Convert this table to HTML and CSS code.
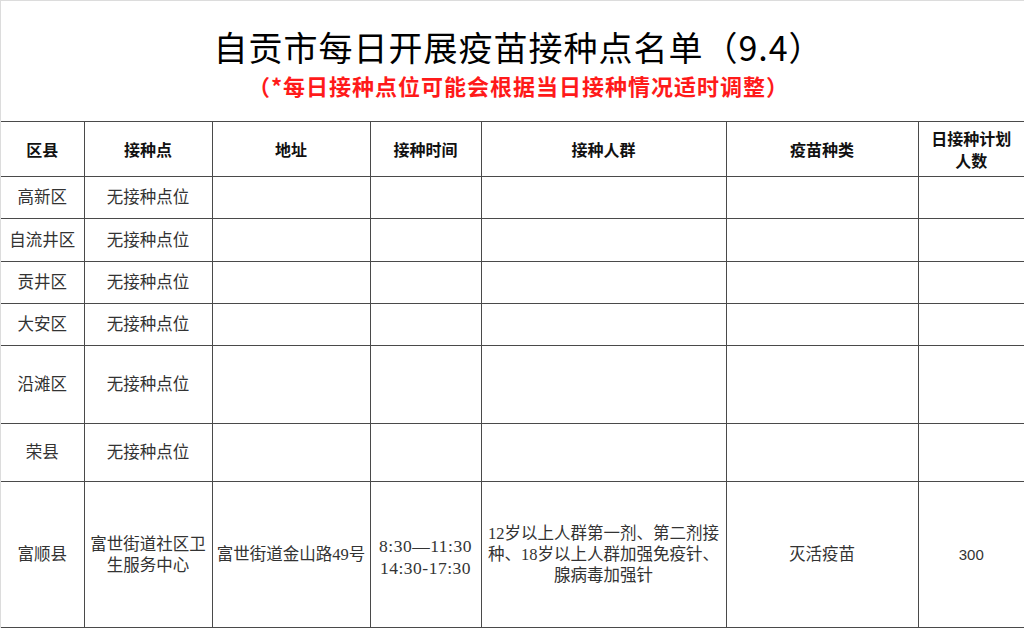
FILE: index.html
```html
<!DOCTYPE html>
<html lang="zh-CN">
<head>
<meta charset="utf-8">
<title>自贡市每日开展疫苗接种点名单</title>
<link rel="stylesheet" href="styles.css">
</head>
<body>
<div class="sheet">
  <header class="heading">
    <h1 class="title">自贡市每日开展疫苗接种点名单（9.4）</h1>
    <p class="note">（*每日接种点位可能会根据当日接种情况适时调整）</p>
  </header>
  <table class="grid">
    <colgroup>
      <col class="c1"><col class="c2"><col class="c3"><col class="c4"><col class="c5"><col class="c6"><col class="c7">
    </colgroup>
    <thead>
      <tr class="r-head">
        <th>区县</th><th>接种点</th><th>地址</th><th>接种时间</th><th>接种人群</th><th>疫苗种类</th><th class="wrap">日接种计划人数</th>
      </tr>
    </thead>
    <tbody>
      <tr class="r-a"><td>高新区</td><td>无接种点位</td><td></td><td></td><td></td><td></td><td></td></tr>
      <tr class="r-b"><td>自流井区</td><td>无接种点位</td><td></td><td></td><td></td><td></td><td></td></tr>
      <tr class="r-a"><td>贡井区</td><td>无接种点位</td><td></td><td></td><td></td><td></td><td></td></tr>
      <tr class="r-a"><td>大安区</td><td>无接种点位</td><td></td><td></td><td></td><td></td><td></td></tr>
      <tr class="r-c"><td>沿滩区</td><td>无接种点位</td><td></td><td></td><td></td><td></td><td></td></tr>
      <tr class="r-d"><td>荣县</td><td>无接种点位</td><td></td><td></td><td></td><td></td><td></td></tr>
      <tr class="r-e">
        <td>富顺县</td>
        <td class="pad">富世街道社区卫生服务中心</td>
        <td>富世街道金山路49号</td>
        <td class="time">8:30—11:30<br>14:30-17:30</td>
        <td class="crowd">12岁以上人群第一剂、第二剂接种、18岁以上人群加强免疫针、腺病毒加强针</td>
        <td>灭活疫苗</td>
        <td class="num">300</td>
      </tr>
    </tbody>
  </table>
</div>
</body>
</html>
```

FILE: styles.css
```css
html, body {
  margin: 0;
  padding: 0;
  background: #fff;
}

.sheet {
  width: 1024px;
  height: 628px;
  box-sizing: border-box;
  border-top: 1px solid #dcdcdc;
  border-left: 1px solid #dcdcdc;
  overflow: hidden;
  font-family: "Liberation Serif", "Noto Sans CJK SC", serif;
}

.heading {
  height: 120px;
  box-sizing: border-box;
  padding-top: 26px;
  text-align: center;
}

.title {
  margin: 0;
  font-family: "Noto Sans CJK SC", sans-serif;
  font-weight: 400;
  font-size: 34px;
  line-height: 40px;
  color: #000;
  padding-left: 12px;
  letter-spacing: 1px;
}

.note {
  margin: 0;
  margin-top: 3px;
  font-family: "Noto Sans CJK SC", sans-serif;
  font-weight: 700;
  font-size: 22px;
  line-height: 30px;
  color: #ff1a1a;
  padding-left: 12px;
  letter-spacing: 1px;
}

.grid {
  width: 1023px;
  border-collapse: collapse;
  table-layout: fixed;
  color: #333;
  font-size: 16.5px;
}

.c1 { width: 83px; }
.c2 { width: 128px; }
.c3 { width: 158px; }
.c4 { width: 111px; }
.c5 { width: 245px; }
.c6 { width: 192px; }
.c7 { width: 106px; }

.grid th,
.grid td {
  border: 1px solid #4a4a4a;
  padding: 0 2px;
  text-align: center;
  vertical-align: middle;
  line-height: 21px;
  font-weight: 400;
}

.grid th {
  color: #111;
  font-family: "Noto Sans CJK SC", sans-serif;
  font-weight: 700;
  font-size: 16px;
}

.grid td {
  font-family: "Liberation Serif", "Noto Sans CJK SC", serif;
}

.grid tr > :first-child { border-left: none; }
.grid tr > :last-child { border-right: none; }

.grid th.wrap {
  padding: 0 8px;
  line-height: 22px;
}

.r-head { height: 55px; }
.r-a { height: 42px; }
.r-b { height: 43px; }
.r-c { height: 78px; }
.r-d { height: 58px; }
.r-e { height: 146px; }

.grid td.pad { padding: 0 4px; }

.grid td.time {
  font-size: 17.5px;
  line-height: 22px;
  letter-spacing: 0.5px;
  padding: 4px 0 0;
}

.grid td.crowd {
  padding: 0 2px;
  line-height: 21px;
}

.grid td.num {
  font-family: "Liberation Sans", sans-serif;
  font-size: 15px;
}
```
